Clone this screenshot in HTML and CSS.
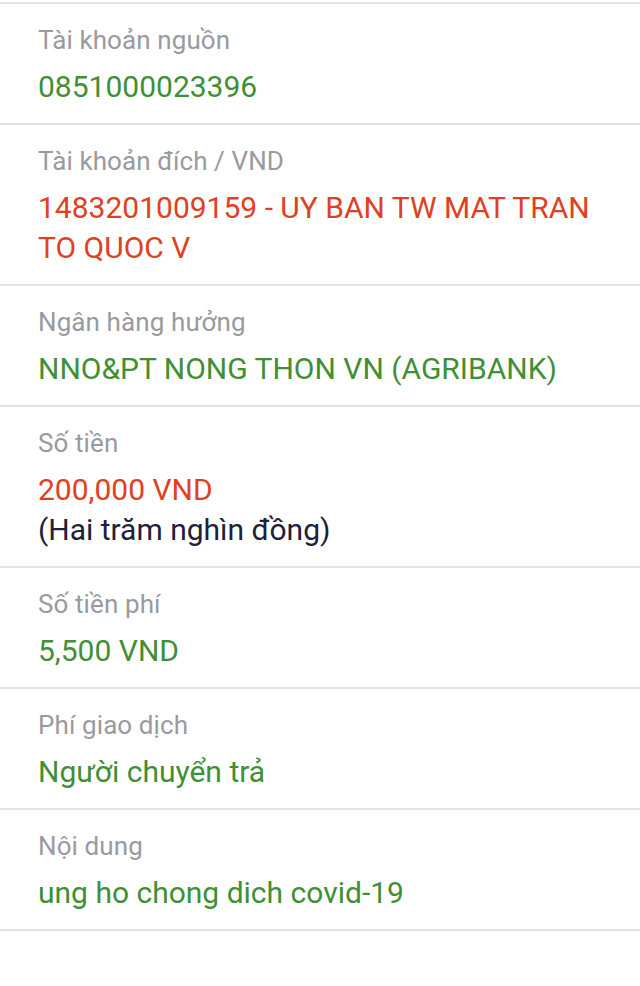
FILE: index.html
```html
<!DOCTYPE html>
<html lang="vi">
  <head>
    <meta charset="UTF-8" />
    <meta name="viewport" content="width=device-width, initial-scale=1.0" />
    <title>Chi tiết giao dịch</title>
    <link rel="stylesheet" href="styles.css">
  </head>

  <body>
    <ul class="detail">
      <li class="row">
        <p class="label">Tài khoản nguồn</p>
        <p class="value green">0851000023396</p>
      </li>
      <li class="row">
        <p class="label">Tài khoản đích / VND</p>
        <p class="value red">1483201009159 - UY BAN TW MAT TRAN TO QUOC V</p>
      </li>
      <li class="row">
        <p class="label">Ngân hàng hưởng</p>
        <p class="value green">NNO&amp;PT NONG THON VN (AGRIBANK)</p>
      </li>
      <li class="row">
        <p class="label">Số tiền</p>
        <p class="value red">200,000 VND</p>
        <p class="value dark">(Hai trăm nghìn đồng)</p>
      </li>
      <li class="row">
        <p class="label">Số tiền phí</p>
        <p class="value green">5,500 VND</p>
      </li>
      <li class="row">
        <p class="label">Phí giao dịch</p>
        <p class="value green">Người chuyển trả</p>
      </li>
      <li class="row">
        <p class="label">Nội dung</p>
        <p class="value green">ung ho chong dich covid-19</p>
      </li>
    </ul>
  </body>
</html>
```

FILE: styles.css
```css
body {
  margin: 0;
  background: #fff;
  font-family: Roboto, "Noto Sans", sans-serif;
}

.detail {
  list-style: none;
  margin: 0;
  padding: 2px 0 0;
}

.row {
  display: flex;
  flex-direction: column;
  padding: 16px 38px;
  border-top: 2px solid #e3e3e5;
}

.row:last-child {
  border-bottom: 2px solid #e3e3e5;
}

.label,
.value {
  margin: 0;
  line-height: 40px;
}

.label {
  font-size: 26px;
  letter-spacing: 0.1px;
  color: #999aa0;
  margin-bottom: 7px;
}

.value {
  font-size: 30px;
}

.green {
  color: #3f8f35;
}

.red {
  color: #e0401f;
}

.dark {
  color: #1d2238;
}
```
